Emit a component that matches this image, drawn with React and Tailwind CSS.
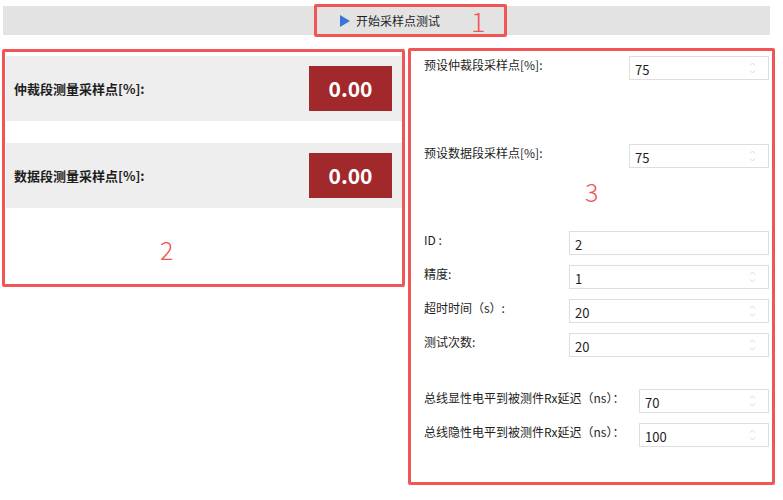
const FONT = { fontFamily: '"Microsoft YaHei", "Noto Sans CJK SC", "Noto Sans", sans-serif' };

const Spin = () => (
  <svg width="9" height="16" viewBox="0 0 9 16" className="shrink-0">
    <path d="M2 5.5 L4.5 3 L7 5.5" fill="none" stroke="#d9d9d9" strokeWidth="1" />
    <path d="M2 10.5 L4.5 13 L7 10.5" fill="none" stroke="#d9d9d9" strokeWidth="1" />
  </svg>
);

const Field = ({ value, spin = true, className }) => (
  <div
    className={`h-[24px] border border-[#dedede] bg-white flex items-center pl-[5px] pr-[11px] text-[13px] text-[#1e1e1e] ${className}`}
  >
    <span className="flex-1 leading-none pt-[2px]">{value}</span>
    {spin && <Spin />}
  </div>
);

const Row = ({ label, value, labelW, spin, className = "" }) => (
  <div className={`flex items-start ${className}`}>
    <div className={`${labelW} shrink-0 text-[12px] leading-[16px] text-[#1e1e1e] pt-[1px]`}>{label}</div>
    <Field value={value} spin={spin} className="flex-1" />
  </div>
);

const Measure = ({ label, value, className = "" }) => (
  <div className={`h-[65px] bg-[#eeeeee] flex items-center justify-between pl-[8px] pr-[10px] ${className}`}>
    <span className="text-[13px] font-bold text-[#1e1e1e]">{label}</span>
    <div className="w-[83px] h-[45px] bg-[#a2292b] flex items-center justify-center text-white text-[21px] font-bold">
      {value}
    </div>
  </div>
);

export default function App() {
  return (
    <div className="w-[783px] h-[500px] bg-white overflow-hidden" style={FONT}>
      {/* toolbar */}
      <div className="mt-[6px] ml-[3px] w-[767px] h-[29px] bg-[#e3e3e3] flex">
        <div className="ml-[311px] -mt-[2px] w-[193px] h-[33px] border-[3px] border-[#f05656] rounded-[2px] flex items-center">
          <svg width="10" height="12" viewBox="0 0 10 12" className="ml-[23px]">
            <path d="M0 0 L10 6 L0 12 Z" fill="#3a75d6" />
          </svg>
          <span className="ml-[6px] text-[12px] text-[#1e1e1e]">开始采样点测试</span>
          <span className="ml-[31px] text-[27px] leading-none font-light text-[#f05656]">1</span>
        </div>
      </div>

      <div className="flex items-start mt-[13px]">
        {/* panel 2 */}
        <div className="ml-[2px] mt-[1px] w-[403px] h-[238px] border-[3px] border-[#f05656] rounded-[2px] pt-[4px] pl-[1px] flex flex-col">
          <Measure label="仲裁段测量采样点[%]:" value="0.00" />
          <Measure label="数据段测量采样点[%]:" value="0.00" className="mt-[22px]" />
          <div className="mt-[29px] ml-[154px] text-[25px] leading-none font-light text-[#f05656]">2</div>
        </div>

        {/* panel 3 */}
        <div className="ml-[3px] w-[367px] h-[437px] border-[3px] border-[#f05656] rounded-[2px] pt-[5px] pl-[13px] pr-[3px] flex flex-col">
          <Row label="预设仲裁段采样点[%]:" value="75" labelW="w-[205px]" />
          <Row label="预设数据段采样点[%]:" value="75" labelW="w-[205px]" className="mt-[64px]" />
          <div className="mt-[11px] ml-[161px] text-[25px] leading-none font-light text-[#f05656]">3</div>
          <Row label="ID :" value="2" labelW="w-[145px]" spin={false} className="mt-[27px]" />
          <Row label="精度:" value="1" labelW="w-[145px]" className="mt-[10px]" />
          <Row label="超时时间（s）:" value="20" labelW="w-[145px]" className="mt-[10px]" />
          <Row label="测试次数:" value="20" labelW="w-[145px]" className="mt-[10px]" />
          <Row label="总线显性电平到被测件Rx延迟（ns）：" value="70" labelW="w-[215px]" className="mt-[32px]" />
          <Row label="总线隐性电平到被测件Rx延迟（ns）：" value="100" labelW="w-[215px]" className="mt-[10px]" />
        </div>
      </div>
    </div>
  );
}
